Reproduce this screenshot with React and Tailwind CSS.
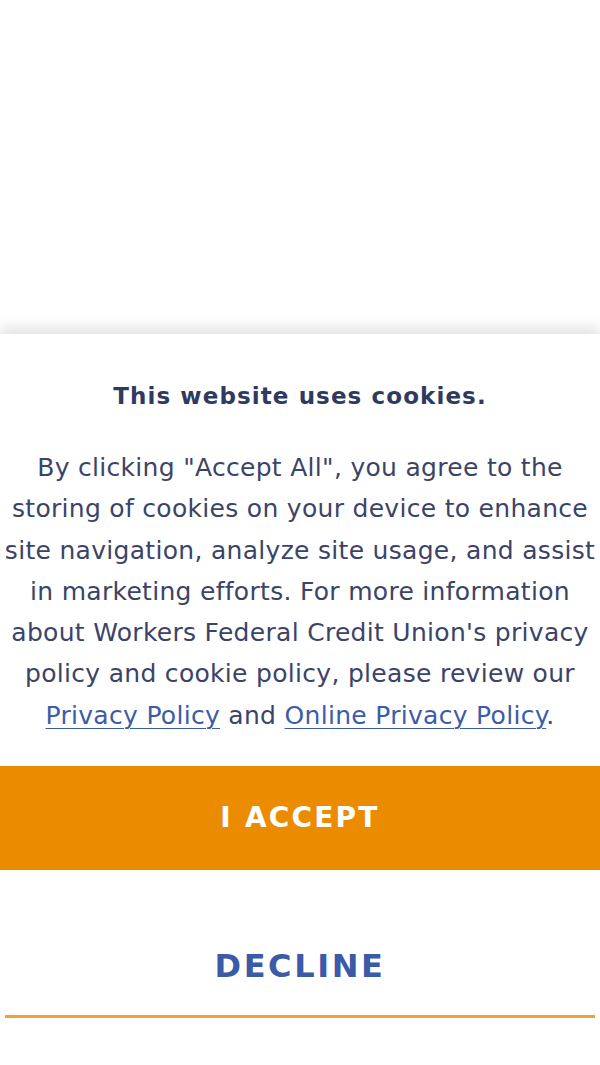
export default function App() {
  const f = { fontFamily: '"DejaVu Sans", "Open Sans", sans-serif' };
  return (
    <div className="w-[600px] h-[1065px] bg-white overflow-hidden flex flex-col" style={f}>
      <div className="h-[334px] shrink-0 bg-white" />
      <div className="flex-1 bg-white shadow-[0_-6px_14px_rgba(0,0,0,0.12)] flex flex-col">
        <h2 className="mt-[46px] text-center text-[23px] font-semibold text-[#2e3a5f] leading-[32px] tracking-[1.1px] whitespace-nowrap">
          This website uses cookies.
        </h2>
        <p className="mt-[35px] text-center text-[25px] leading-[41.3px] text-[#3b4468] tracking-[0.3px] whitespace-nowrap">
          By clicking "Accept All", you agree to the<br />
          storing of cookies on your device to enhance<br />
          site navigation, analyze site usage, and assist<br />
          in marketing efforts. For more information<br />
          about Workers Federal Credit Union's privacy<br />
          policy and cookie policy, please review our<br />
          <a href="#" className="text-[#3d5ca8] underline underline-offset-[4px] decoration-1">Privacy Policy</a> and{" "}
          <a href="#" className="text-[#3d5ca8] underline underline-offset-[4px] decoration-1">Online Privacy Policy</a>.
        </p>
        <button className="mt-[30px] h-[104px] w-full bg-[#eb8c00] text-white text-[28px] font-semibold tracking-[2.2px]">
          I ACCEPT
        </button>
        <div className="mx-[5px] mt-[42px] border-b-[3px] border-[#f0a232] h-[106px] flex items-center justify-center pt-[4px]">
          <span className="text-[#3b5aa8] text-[32px] font-semibold tracking-[2.6px]">DECLINE</span>
        </div>
      </div>
    </div>
  );
}
